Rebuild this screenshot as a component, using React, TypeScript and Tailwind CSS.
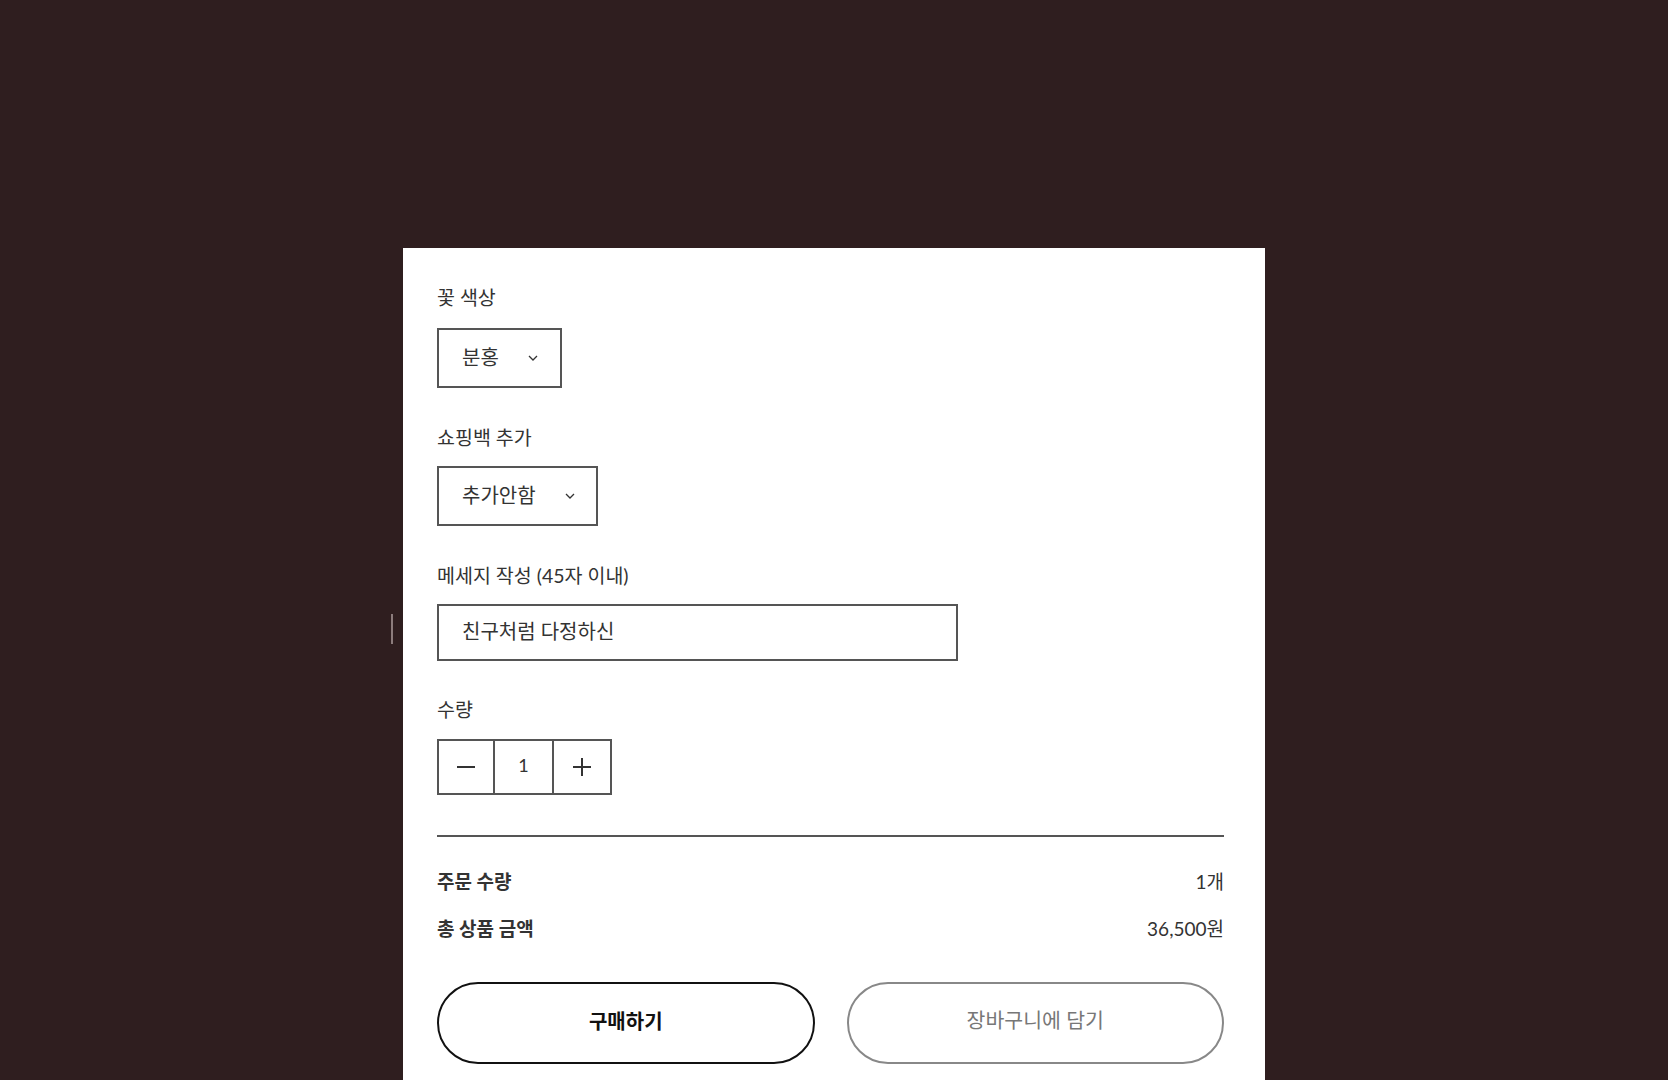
const font = { fontFamily: 'Lato, "Noto Sans CJK KR", "Noto Sans", sans-serif' };

function Chevron() {
  return (
    <svg width="10" height="6" viewBox="0 0 10 6" fill="none" className="shrink-0">
      <path d="M1 1l4 4 4-4" stroke="#333" strokeWidth="1.3" />
    </svg>
  );
}

function Select({ value, width }: { value: string; width: string }) {
  return (
    <div className={`flex h-[60px] items-center border-2 border-[#555] pl-[23px] ${width}`}>
      <span className="pb-[3px] text-[20px] leading-none text-[#333]">{value}</span>
      <span className="ml-[29px]">
        <Chevron />
      </span>
    </div>
  );
}

export default function App() {
  return (
    <div className="relative min-h-screen bg-[#2f1e1f] pt-[248px]" style={font}>
      {/* stray scrollbar mark */}
      <div className="absolute left-[391px] top-[614px] h-[30px] w-[2px] bg-[#8c7c7c]"></div>

      <div className="mx-auto w-[862px] min-h-[832px] bg-white pl-[34px] pr-[41px] pt-[37px] text-[#333]">
        {/* Flower colour */}
        <div className="text-[19.5px] leading-[26px]">꽃 색상</div>
        <div className="mt-[17px]">
          <Select value="분홍" width="w-[125px]" />
        </div>

        {/* Shopping bag */}
        <div className="mt-[37px] text-[19.5px] leading-[26px]">쇼핑백 추가</div>
        <div className="mt-[15px]">
          <Select value="추가안함" width="w-[161px]" />
        </div>

        {/* Message */}
        <div className="mt-[37px] text-[19.5px] leading-[26px]">메세지 작성 (45자 이내)</div>
        <div className="mt-[15px] flex h-[57px] w-[521px] items-center border-2 border-[#555] pl-[23px]">
          <span className="pb-[3px] text-[20px] leading-none text-[#333]">친구처럼 다정하신</span>
        </div>

        {/* Quantity */}
        <div className="mt-[36px] text-[19.5px] leading-[26px]">수량</div>
        <div className="mt-[16px] flex h-[56px] w-[175px] border-2 border-[#555]">
          <div className="flex w-[56px] items-center justify-center border-r-2 border-[#555]">
            <svg width="18" height="2" viewBox="0 0 18 2">
              <rect width="18" height="2" fill="#333" />
            </svg>
          </div>
          <div className="flex w-[59px] items-center justify-center border-r-2 border-[#555] pb-[4px] text-[18px]">
            1
          </div>
          <div className="flex flex-1 items-center justify-center">
            <svg width="18" height="18" viewBox="0 0 18 18">
              <rect x="8" width="2" height="18" fill="#333" />
              <rect y="8" width="18" height="2" fill="#333" />
            </svg>
          </div>
        </div>

        <div className="mt-[40px] h-[2px] bg-[#555]"></div>

        {/* Summary */}
        <div className="mt-[32px] flex items-center justify-between text-[19px] leading-[26px]">
          <span className="font-bold">주문 수량</span>
          <span>1개</span>
        </div>
        <div className="mt-[21px] flex items-center justify-between text-[19px] leading-[26px]">
          <span className="font-bold">총 상품 금액</span>
          <span>36,500원</span>
        </div>

        {/* Actions */}
        <div className="mt-[40px] flex gap-[32px]">
          <button className="h-[82px] flex-1 rounded-full border-2 border-[#111] bg-white pb-[5px] text-[20px] font-bold text-[#111]">
            구매하기
          </button>
          <button className="h-[82px] flex-1 rounded-full border-2 border-[#888] bg-white pb-[5px] text-[20.5px] text-[#777]">
            장바구니에 담기
          </button>
        </div>
      </div>
    </div>
  );
}
